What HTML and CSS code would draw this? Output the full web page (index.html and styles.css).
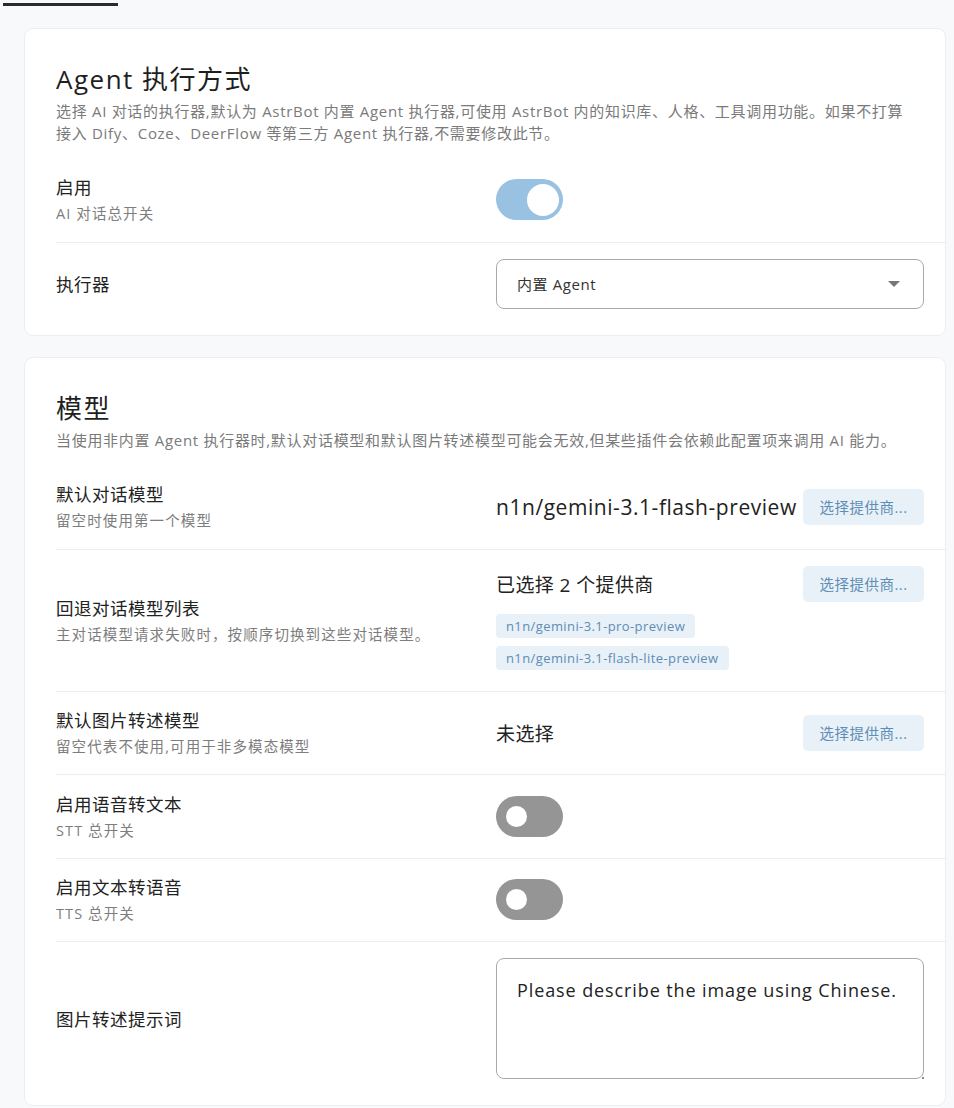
FILE: index.html
```html
<!DOCTYPE html>
<html lang="zh-CN">
<head>
<meta charset="utf-8">
<title>配置</title>
<link rel="stylesheet" href="styles.css">
</head>
<body>
<div class="tabbar"><div class="tab-indicator"></div></div>
<main class="page">
  <section class="card">
    <h2 class="card-title">Agent 执行方式</h2>
    <p class="card-desc">选择 AI 对话的执行器,默认为 AstrBot 内置 Agent 执行器,可使用 AstrBot 内的知识库、人格、工具调用功能。如果不打算接入 Dify、Coze、DeerFlow 等第三方 Agent 执行器,不需要修改此节。</p>
    <div class="rows">
      <div class="row">
        <div class="label"><div class="label-title">启用</div><div class="label-sub">AI 对话总开关</div></div>
        <div class="control"><span class="switch on"><span class="thumb"></span></span></div>
      </div>
      <div class="row">
        <div class="label"><div class="label-title">执行器</div></div>
        <div class="control">
          <div class="select"><span>内置 Agent</span><svg class="caret" width="12" height="6" viewBox="0 0 12 6"><path d="M0 0h12L6 6z" fill="#777"/></svg></div>
        </div>
      </div>
    </div>
  </section>

  <section class="card">
    <h2 class="card-title">模型</h2>
    <p class="card-desc">当使用非内置 Agent 执行器时,默认对话模型和默认图片转述模型可能会无效,但某些插件会依赖此配置项来调用 AI 能力。</p>
    <div class="rows">
      <div class="row">
        <div class="label"><div class="label-title">默认对话模型</div><div class="label-sub">留空时使用第一个模型</div></div>
        <div class="control"><div class="pick"><span class="value">n1n/gemini-3.1-flash-preview</span><button class="btn">选择提供商...</button></div></div>
      </div>
      <div class="row">
        <div class="label"><div class="label-title">回退对话模型列表</div><div class="label-sub">主对话模型请求失败时，按顺序切换到这些对话模型。</div></div>
        <div class="control">
          <div class="pick"><span class="value cjk">已选择 2 个提供商</span><button class="btn">选择提供商...</button></div>
          <div class="chips">
            <span class="chip">n1n/gemini-3.1-pro-preview</span>
            <span class="chip">n1n/gemini-3.1-flash-lite-preview</span>
          </div>
        </div>
      </div>
      <div class="row">
        <div class="label"><div class="label-title">默认图片转述模型</div><div class="label-sub">留空代表不使用,可用于非多模态模型</div></div>
        <div class="control"><div class="pick"><span class="value cjk">未选择</span><button class="btn">选择提供商...</button></div></div>
      </div>
      <div class="row">
        <div class="label"><div class="label-title">启用语音转文本</div><div class="label-sub">STT 总开关</div></div>
        <div class="control"><span class="switch off"><span class="thumb"></span></span></div>
      </div>
      <div class="row">
        <div class="label"><div class="label-title">启用文本转语音</div><div class="label-sub">TTS 总开关</div></div>
        <div class="control"><span class="switch off"><span class="thumb"></span></span></div>
      </div>
      <div class="row">
        <div class="label"><div class="label-title">图片转述提示词</div></div>
        <div class="control"><div class="textarea">Please describe the image using Chinese.<span class="grip"></span></div></div>
      </div>
    </div>
  </section>
</main>
</body>
</html>
```

FILE: styles.css
```css
* { box-sizing: border-box; }
html, body { margin: 0; padding: 0; }
body {
  background: #f8f9fb;
  font-family: "Open Sans", "Noto Sans CJK SC", sans-serif;
  color: #222;
  width: 954px;
}
.tabbar { height: 28px; padding-top: 3px; padding-left: 3px; }
.tab-indicator { width: 115px; height: 3px; background: #2b2b2b; }
.page { padding: 0 8px 0 24px; display: flex; flex-direction: column; gap: 21px; }
.card {
  background: #fff;
  border: 1px solid #eceef1;
  border-radius: 9px;
  padding: 34px 0 10px 31px;
}
.card-title {
  margin: 0;
  font-weight: 400;
  font-size: 26px;
  letter-spacing: 1.5px;
  line-height: 32px;
  color: #1f1f1f;
}
.card-desc {
  margin: 5px 32px 14px 0;
  font-size: 15px;
  letter-spacing: 0.7px;
  line-height: 22px;
  color: #7a7a7a;
}
.rows { display: flex; flex-direction: column; }
.row {
  display: grid;
  grid-template-columns: 440px 1fr;
  align-items: center;
  min-height: 83.5px;
  padding: 16px 21px 16px 0;
  border-top: 1px solid #ececec;
}
.row:first-child { border-top: none; }
.label-title { font-size: 17.5px; letter-spacing: 0.5px; line-height: 24px; color: #222; }
.label-sub { font-size: 14.5px; letter-spacing: 1.1px; line-height: 20px; margin-top: 5px; color: #7d7d7d; }
.control { display: flex; flex-direction: column; }
.switch {
  position: relative;
  display: block;
  width: 67px; height: 41px;
  border-radius: 21px;
}
.switch.on { background: #99c1e1; }
.switch.off { background: #959595; }
.switch .thumb { position: absolute; background: #fff; border-radius: 50%; }
.switch.on .thumb { width: 32px; height: 32px; top: 4.5px; right: 4px; }
.switch.off .thumb { width: 21px; height: 21px; top: 10px; left: 10px; }
.select {
  height: 50px;
  border: 1px solid #a9a9a9;
  border-radius: 8px;
  display: flex; align-items: center; justify-content: space-between;
  padding: 0 23px 0 20px;
  font-size: 15px;
  letter-spacing: 0.6px;
  color: #333;
}
.pick { display: flex; align-items: center; justify-content: space-between; }
.value { font-size: 21px; letter-spacing: 0.55px; color: #222; }
.value.cjk { font-size: 19px; letter-spacing: 0.4px; }
.btn {
  font-family: inherit;
  border: none;
  background: #e8f1f8;
  color: #5e8db6;
  font-size: 14.5px;
  letter-spacing: 0.5px;
  width: 121px; height: 36px;
  border-radius: 5px;
  padding: 0;
}
.chips { display: flex; flex-direction: column; align-items: flex-start; gap: 8px; margin-top: 12px; margin-bottom: 5px; }
.chip {
  background: #e8f1f8;
  color: #5f8cb3;
  font-size: 13px;
  letter-spacing: 0.4px;
  height: 24px; line-height: 24px;
  padding: 0 10px;
  border-radius: 4px;
}
.textarea {
  position: relative;
  height: 121px;
  border: 1px solid #a9a9a9;
  border-radius: 8px;
  padding: 17px 20px;
  font-size: 18px;
  letter-spacing: 0.9px;
  line-height: 28px;
  color: #222;
}
.grip {
  position: absolute;
  right: -1px; bottom: -1px;
  width: 2px; height: 2px;
  background: #888;
}
```
